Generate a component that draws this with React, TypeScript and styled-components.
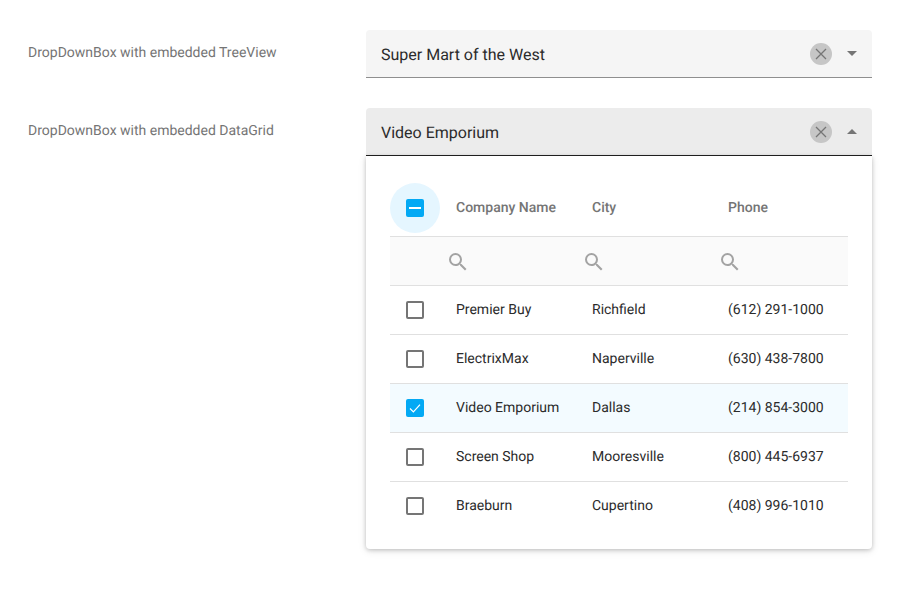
import styled, { createGlobalStyle } from "styled-components"

const GlobalStyle = createGlobalStyle`
  html, body {
    margin: 0;
    padding: 0;
    background: #fff;
    font-family: Roboto, "Liberation Sans", sans-serif;
    text-rendering: geometricPrecision;
  }
`

const Page = styled.div`
  width: 900px;
  height: 600px;
  box-sizing: border-box;
  padding: 30px 28px 0;
  display: flex;
  flex-direction: column;
  gap: 30px;
`

const Row = styled.div`
  display: grid;
  grid-template-columns: 338px 506px;
`

const Label = styled.div`
  font-size: 14px;
  line-height: 20px;
  color: #757575;
  padding-top: 13px;
`

const FieldWrap = styled.div`
  position: relative;
`

const Field = styled.div<{ $open?: boolean }>`
  height: 48px;
  box-sizing: border-box;
  display: flex;
  align-items: center;
  padding: 0 15px;
  border-radius: 4px 4px 0 0;
  background: ${(p) => (p.$open ? "#ececec" : "#f5f5f5")};
  border-bottom: 1px solid ${(p) => (p.$open ? "#212121" : "#8f8f8f")};
  color: #2b2b2b;
  font-size: 16px;
`

const FieldText = styled.div`
  flex: 1;
  padding-top: 2px;
`

const ClearButton = styled.div`
  width: 22px;
  height: 22px;
  border-radius: 50%;
  background: #c6c6c6;
  display: flex;
  align-items: center;
  justify-content: center;
  margin-right: 15px;
`

const Arrow = styled.div<{ $up?: boolean }>`
  width: 0;
  height: 0;
  border-left: 5px solid transparent;
  border-right: 5px solid transparent;
  ${(p) =>
    p.$up ? "border-bottom: 5px solid #757575;" : "border-top: 5px solid #757575;"}
`

const Popup = styled.div`
  position: absolute;
  top: 48px;
  left: 0;
  right: 0;
  box-sizing: border-box;
  padding: 24px 24px 19px;
  background: #fff;
  border-radius: 0 0 4px 4px;
  box-shadow: 0 1px 4px rgba(0, 0, 0, 0.2), 0 2px 8px rgba(0, 0, 0, 0.1);
`

const GridRow = styled.div<{ $height: number; $bg?: string; $last?: boolean }>`
  display: grid;
  grid-template-columns: 50px 136px 136px 136px;
  align-items: center;
  height: ${(p) => (p.$last ? p.$height - 1 : p.$height)}px;
  box-sizing: border-box;
  background: ${(p) => p.$bg || "transparent"};
  border-bottom: ${(p) => (p.$last ? "none" : "1px solid #e0e0e0")};
`

const HeaderCell = styled.div`
  padding: 0 16px;
  font-size: 14px;
  font-weight: 500;
  color: #757575;
`

const Cell = styled.div`
  padding: 0 16px;
  font-size: 14px;
  color: #2b2b2b;
  white-space: nowrap;
  margin-top: -1px;
`

const FilterCell = styled.div`
  padding-left: 6px;
  padding-top: 1px;
  display: flex;
  align-items: center;
`

const CheckCell = styled.div`
  display: flex;
  justify-content: center;
  align-items: center;
`

const Halo = styled.div`
  width: 50px;
  height: 50px;
  border-radius: 50%;
  background: #e5f6ff;
  display: flex;
  justify-content: center;
  align-items: center;
`

const Box = styled.div<{ $on?: boolean }>`
  width: 18px;
  height: 18px;
  box-sizing: border-box;
  border-radius: 2px;
  display: flex;
  align-items: center;
  justify-content: center;
  background: ${(p) => (p.$on ? "#03a9f4" : "#fff")};
  border: ${(p) => (p.$on ? "none" : "2px solid #757575")};
`

const ClearIcon = () => (
  <svg width="16" height="16" viewBox="0 0 16 16" fill="none">
    <path d="M3 3l10 10M13 3L3 13" stroke="#757575" strokeWidth="1.3" />
  </svg>
)

const SearchIcon = () => (
  <svg width="24" height="24" viewBox="0 0 24 24" fill="#a3a3a3">
    <path d="M15.5 14h-.79l-.28-.27A6.471 6.471 0 0 0 16 9.5 6.5 6.5 0 1 0 9.5 16c1.61 0 3.09-.59 4.23-1.57l.27.28v.79l5 4.99L20.49 19l-4.99-5zm-6 0C7.01 14 5 11.99 5 9.5S7.01 5 9.5 5 14 7.01 14 9.5 11.99 14 9.5 14z" />
  </svg>
)

const customers = [
  { name: "Premier Buy", city: "Richfield", phone: "(612) 291-1000" },
  { name: "ElectrixMax", city: "Naperville", phone: "(630) 438-7800" },
  { name: "Video Emporium", city: "Dallas", phone: "(214) 854-3000", selected: true },
  { name: "Screen Shop", city: "Mooresville", phone: "(800) 445-6937" },
  { name: "Braeburn", city: "Cupertino", phone: "(408) 996-1010" },
]

export default function App() {
  return (
    <Page>
      <GlobalStyle />
      <Row>
        <Label>DropDownBox with embedded TreeView</Label>
        <FieldWrap>
          <Field>
            <FieldText>Super Mart of the West</FieldText>
            <ClearButton>
              <ClearIcon />
            </ClearButton>
            <Arrow />
          </Field>
        </FieldWrap>
      </Row>
      <Row>
        <Label>DropDownBox with embedded DataGrid</Label>
        <FieldWrap>
          <Field $open>
            <FieldText>Video Emporium</FieldText>
            <ClearButton>
              <ClearIcon />
            </ClearButton>
            <Arrow $up />
          </Field>
          <Popup>
            <GridRow $height={57}>
              <CheckCell>
                <Halo>
                  <Box $on>
                    <svg width="12" height="12" viewBox="0 0 12 12">
                      <rect x="0" y="5" width="12" height="2" fill="#fff" />
                    </svg>
                  </Box>
                </Halo>
              </CheckCell>
              <HeaderCell>Company Name</HeaderCell>
              <HeaderCell>City</HeaderCell>
              <HeaderCell>Phone</HeaderCell>
            </GridRow>
            <GridRow $height={49} $bg="#fafafa">
              <div />
              <FilterCell>
                <SearchIcon />
              </FilterCell>
              <FilterCell>
                <SearchIcon />
              </FilterCell>
              <FilterCell>
                <SearchIcon />
              </FilterCell>
            </GridRow>
            {customers.map((c, i) => (
              <GridRow
                key={c.name}
                $height={49}
                $bg={c.selected ? "#f3fbff" : undefined}
                $last={i === customers.length - 1}
              >
                <CheckCell>
                  <Box $on={c.selected}>
                    {c.selected && (
                      <svg width="14" height="14" viewBox="0 0 14 14" fill="none">
                        <path d="M2 7.5l3.4 3.4L12 3.6" stroke="#fff" strokeWidth="1.2" />
                      </svg>
                    )}
                  </Box>
                </CheckCell>
                <Cell>{c.name}</Cell>
                <Cell>{c.city}</Cell>
                <Cell>{c.phone}</Cell>
              </GridRow>
            ))}
          </Popup>
        </FieldWrap>
      </Row>
    </Page>
  )
}
